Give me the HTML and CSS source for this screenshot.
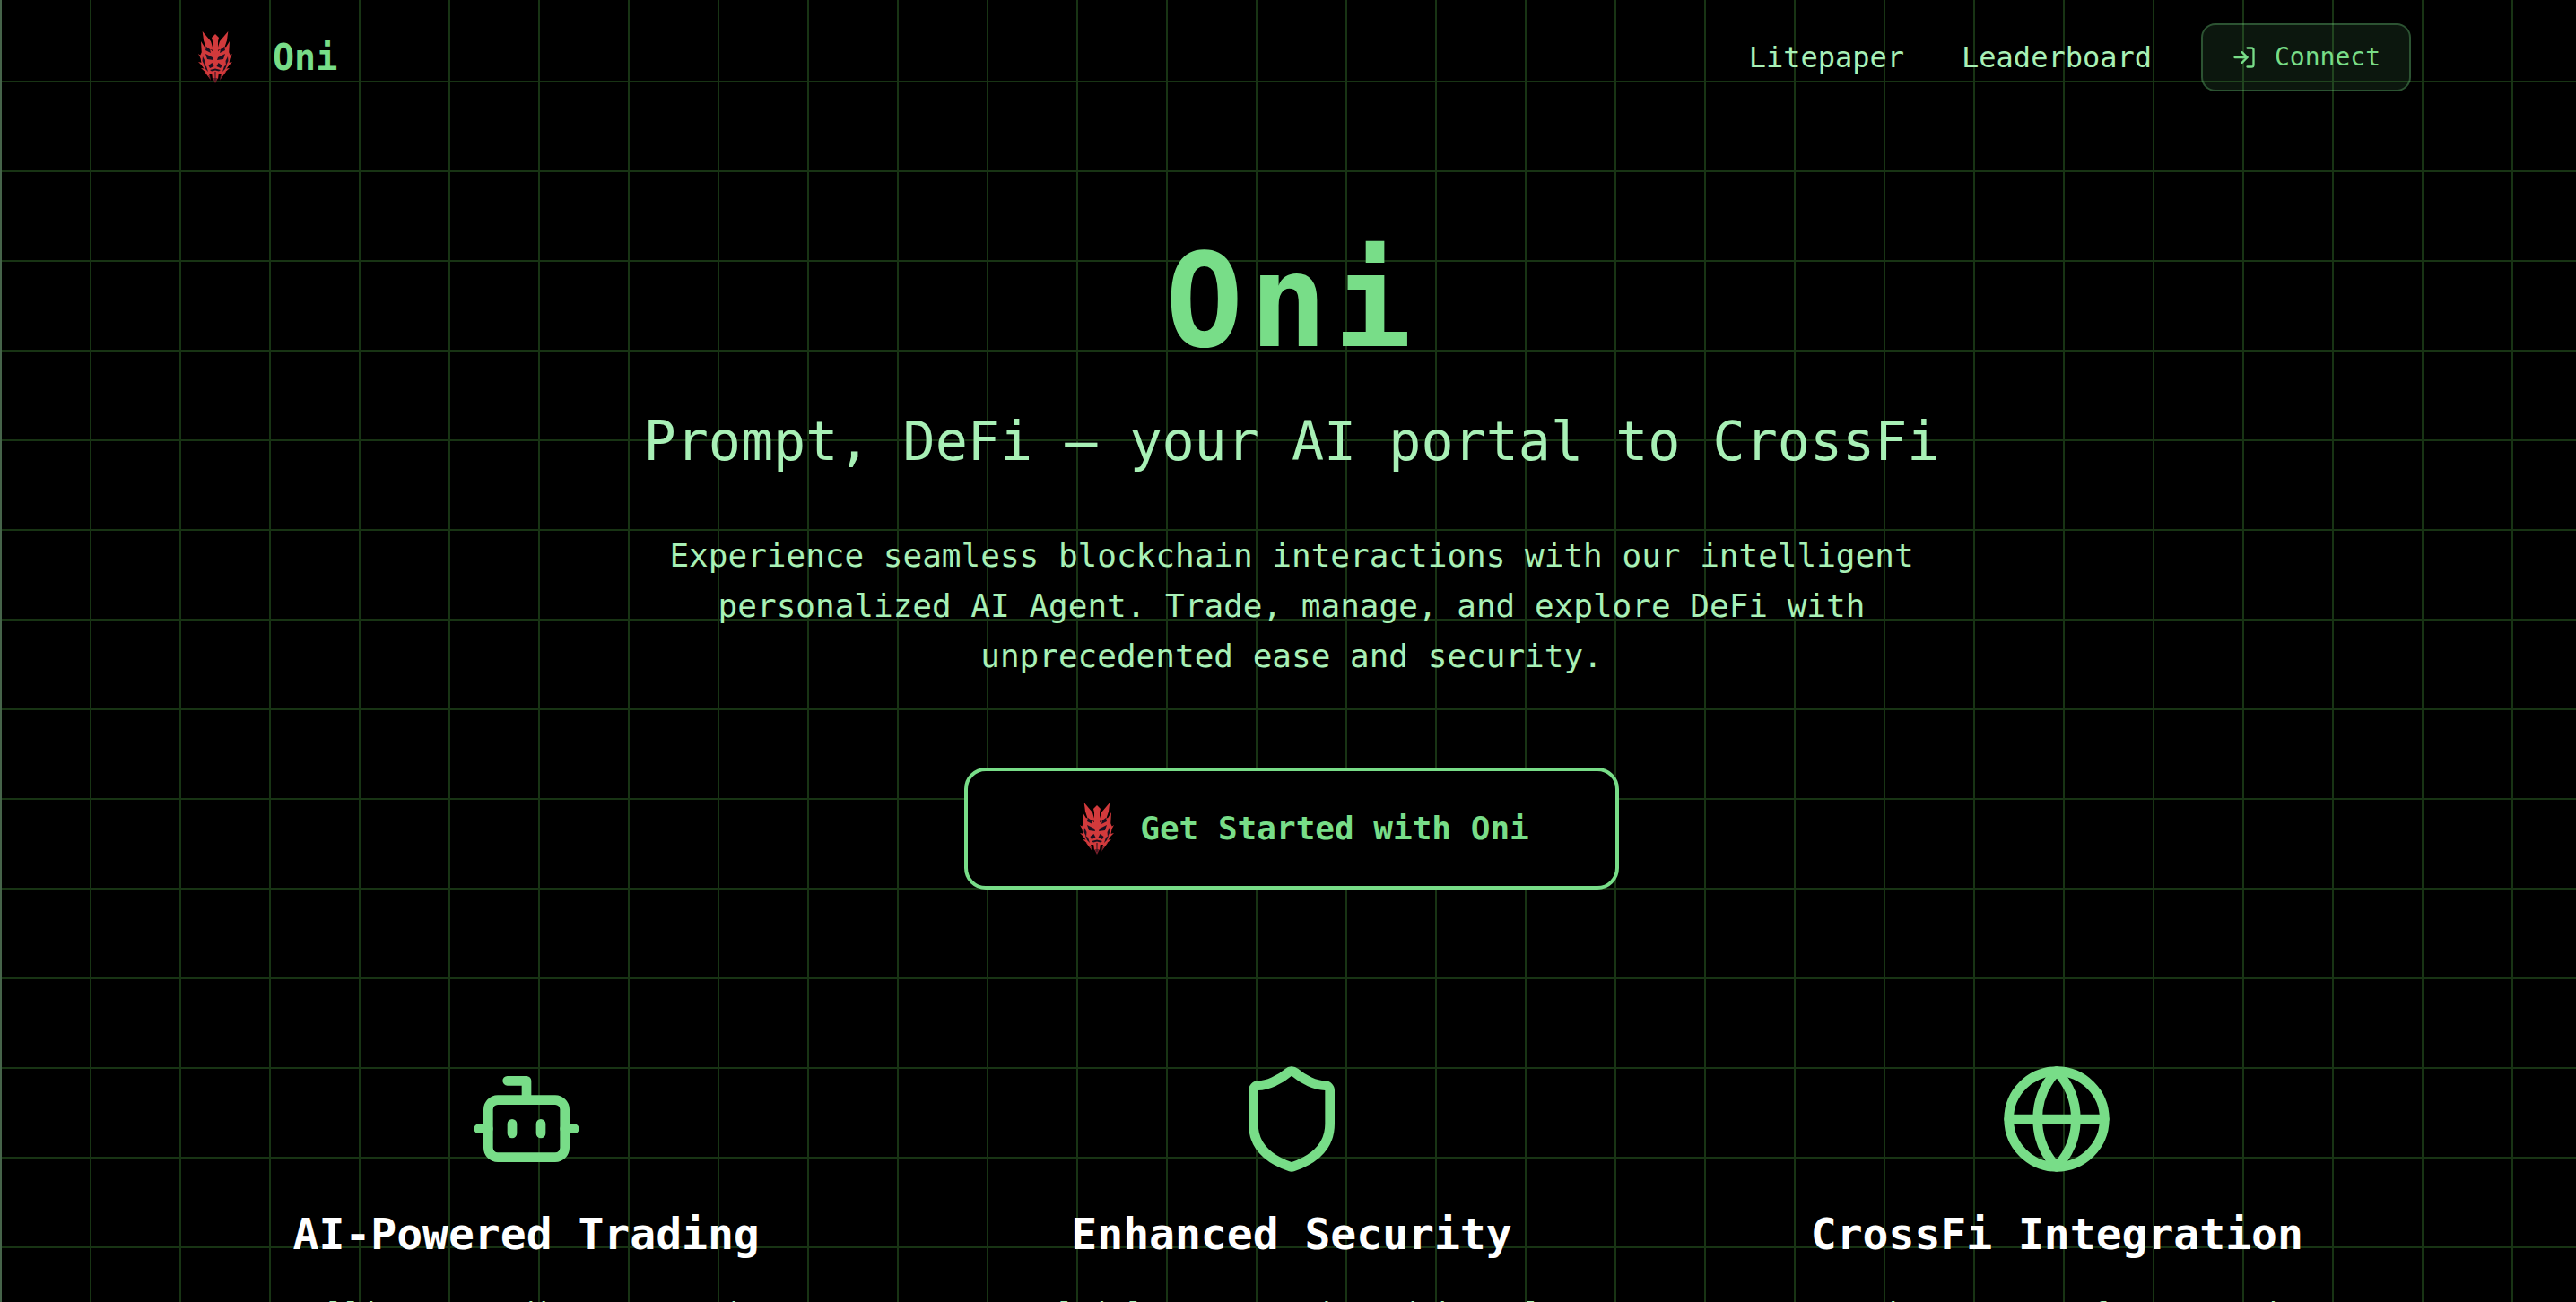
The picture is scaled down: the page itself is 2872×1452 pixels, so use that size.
FILE: index.html
```html
<!DOCTYPE html>
<html lang="en">
<head>
<meta charset="utf-8">
<title>Oni</title>
<link rel="stylesheet" href="styles.css">
</head>
<body>
<svg class="sprite" aria-hidden="true">
  <symbol id="oni-mask" viewBox="0 0 96 96">
    <g fill="#d23a3c">
      <polygon points="33.7,19 43,30 46,40 38,38 35,29"/>
      <polygon points="62.3,19 53,30 50,40 58,38 61,29"/>
      <polygon points="48,22 52,26 51,30 51,46 45,46 45,30 44,26"/>
      <polygon points="36,36 44,40 48,45 52,40 60,36 65,46 63,57 57,66 39,66 33,57 31,46"/>
      <polygon points="32,30 37,38 33,46"/>
      <polygon points="64,30 59,38 63,46"/>
      <polygon points="29,44 36,49 35,55"/>
      <polygon points="67,44 60,49 61,55"/>
      <polygon points="29,53 37,55 37,61"/>
      <polygon points="67,53 59,55 59,61"/>
      <polygon points="32,60 39,61 40,67"/>
      <polygon points="64,60 57,61 56,67"/>
      <polygon points="36,64 41,65 42,72"/>
      <polygon points="60,64 55,65 54,72"/>
      <polygon points="44,64 52,64 51,72 45,72"/>
    </g>
    <g fill="#7a1f2a">
      <polygon points="45,71 51,71 48,77"/>
      <polygon points="40,68 42,68 43,74"/>
      <polygon points="56,68 54,68 53,74"/>
    </g>
    <g fill="#1a1020">
      <polygon points="37,44 45,48 46,51 39,50"/>
      <polygon points="59,44 51,48 50,51 57,50"/>
      <polygon points="44.5,54 46.5,58 42,60 40.5,57"/>
      <polygon points="51.5,54 49.5,58 54,60 55.5,57"/>
      <polygon points="42,62 48,60.5 54,62 52,63.5 48,62.5 44,63.5"/>
      <polygon points="47.5,64 48.5,64 48.4,74 47.6,74"/>
      <polygon points="34,47 36.5,52 36,57 33.5,52"/>
      <polygon points="62,47 59.5,52 60,57 62.5,52"/>
      <polygon points="38,36 42,39 43,43 37,40"/>
      <polygon points="58,36 54,39 53,43 59,40"/>
      <polygon points="35,56 38,58 40,64 37,61"/>
      <polygon points="61,56 58,58 56,64 59,61"/>
    </g>
  </symbol>
</svg>

<div class="page">
  <div class="container">
    <nav class="nav">
      <a class="brand" href="#">
        <svg class="mask"><use href="#oni-mask"/></svg>
        <span class="brand-name">Oni</span>
      </a>
      <div class="nav-right">
        <a class="nav-link" href="#">Litepaper</a>
        <a class="nav-link" href="#">Leaderboard</a>
        <button class="connect" type="button">
          <svg class="connect-icon" viewBox="0 0 24 24" fill="none" stroke="currentColor" stroke-width="2" stroke-linecap="round" stroke-linejoin="round"><path d="m10 17 5-5-5-5"/><path d="M15 12H3"/><path d="M15 3h4a2 2 0 0 1 2 2v14a2 2 0 0 1-2 2h-4"/></svg>
          <span>Connect</span>
        </button>
      </div>
    </nav>

    <section class="hero">
      <h1 class="hero-title">Oni</h1>
      <h2 class="hero-sub">Prompt, DeFi — your AI portal to CrossFi</h2>
      <p class="hero-text">Experience seamless blockchain interactions with our intelligent personalized AI Agent. Trade, manage, and explore DeFi with unprecedented ease and security.</p>
      <a class="cta" href="#">
        <svg class="mask"><use href="#oni-mask"/></svg>
        <span>Get Started with Oni</span>
      </a>
    </section>

    <section class="features">
      <article class="feature">
        <svg class="feature-icon" viewBox="0 0 24 24" fill="none" stroke="currentColor" stroke-width="2" stroke-linecap="round" stroke-linejoin="round"><path d="M12 8V4H8"/><rect width="16" height="12" x="4" y="8" rx="2"/><path d="M2 14h2"/><path d="M20 14h2"/><path d="M15 13v2"/><path d="M9 13v2"/></svg>
        <h3 class="feature-title">AI-Powered Trading</h3>
        <p class="feature-text">Intelligent trading strategies, optimized by advanced AI models</p>
      </article>
      <article class="feature">
        <svg class="feature-icon" viewBox="0 0 24 24" fill="none" stroke="currentColor" stroke-width="2" stroke-linecap="round" stroke-linejoin="round"><path d="M20 13c0 5-3.5 7.5-7.66 8.95a1 1 0 0 1-.67-.01C7.5 20.5 4 18 4 13V6a1 1 0 0 1 1-1c2 0 4.5-1.2 6.24-2.72a1.17 1.17 0 0 1 1.52 0C14.51 3.81 17 5 19 5a1 1 0 0 1 1 1z"/></svg>
        <h3 class="feature-title">Enhanced Security</h3>
        <p class="feature-text">Multi-layer security with real-time monitoring of your assets</p>
      </article>
      <article class="feature">
        <svg class="feature-icon" viewBox="0 0 24 24" fill="none" stroke="currentColor" stroke-width="2" stroke-linecap="round" stroke-linejoin="round"><circle cx="12" cy="12" r="10"/><path d="M12 2a14.5 14.5 0 0 0 0 20 14.5 14.5 0 0 0 0-20"/><path d="M2 12h20"/></svg>
        <h3 class="feature-title">CrossFi Integration</h3>
        <p class="feature-text">Native support for CrossFi ecosystem and its DeFi protocols</p>
      </article>
    </section>
  </div>
</div>
</body>
</html>
```

FILE: styles.css
```css
* {
  box-sizing: border-box;
}

html,
body {
  margin: 0;
  height: 100%;
  overflow: hidden;
  background: #000;
}

a {
  color: inherit;
  text-decoration: none;
}

.sprite {
  display: none;
}

.page {
  width: 2880px;
  height: 1452px;
  overflow: hidden;
  color: #a8f0b6;
  font-family: "DejaVu Sans Mono", monospace;
  background-color: #000;
  background-image:
    linear-gradient(#46644a, #46644a),
    linear-gradient(#183414 2px, transparent 2px),
    linear-gradient(90deg, #183414 2px, transparent 2px);
  background-size: 2px 100%, 100px 100px, 100px 100px;
  background-position: 0 0, 0 -10px, 0 0;
  background-repeat: no-repeat, repeat, repeat;
}

.container {
  width: 2560px;
  margin: 0 auto;
  padding: 0 32px;
}

.nav {
  display: flex;
  align-items: center;
  justify-content: space-between;
  height: 128px;
  padding: 16px 0;
}

.brand {
  display: flex;
  align-items: center;
  gap: 16px;
}

.mask {
  display: block;
  flex: none;
  width: 96px;
  height: 96px;
}

.brand-name {
  color: #78dd88;
  font-size: 40px;
  line-height: 56px;
  font-weight: 700;
}

.nav-right {
  display: flex;
  align-items: center;
  gap: 64px;
}

.nav-link {
  font-size: 32px;
  line-height: 48px;
}

.connect {
  display: flex;
  align-items: center;
  gap: 20px;
  height: 76px;
  margin-left: -9px;
  padding: 0 32px;
  color: #78dd88;
  font-family: inherit;
  font-size: 28px;
  line-height: 40px;
  background: rgba(120, 221, 136, 0.1);
  border: 2px solid rgba(120, 221, 136, 0.3);
  border-radius: 16px;
}

.connect-icon {
  width: 28px;
  height: 28px;
}

.hero {
  display: flex;
  flex-direction: column;
  align-items: center;
  padding-top: 136px;
  text-align: center;
}

.hero-title {
  margin: 0 0 48px;
  color: #78dd88;
  font-size: 144px;
  line-height: 144px;
  font-weight: 700;
  letter-spacing: 7.2px;
}

.hero-sub {
  margin: 0 0 64px;
  font-size: 60px;
  line-height: 72px;
  font-weight: 400;
}

.hero-text {
  width: 1536px;
  margin: 0 0 96px;
  font-size: 36px;
  line-height: 56px;
}

.cta {
  display: flex;
  align-items: center;
  padding: 16px 96px;
  color: #78dd88;
  font-size: 36px;
  line-height: 56px;
  font-weight: 700;
  background: #000;
  border: 4px solid #78dd88;
  border-radius: 24px;
}

.features {
  display: grid;
  grid-template-columns: repeat(3, 1fr);
  gap: 64px;
  margin-top: 128px;
}

.feature {
  display: flex;
  flex-direction: column;
  align-items: center;
  padding: 64px;
  text-align: center;
}

.feature-icon {
  width: 128px;
  height: 128px;
  margin-bottom: 32px;
  color: #78dd88;
}

.feature-title {
  margin: 0 0 32px;
  color: #fff;
  font-size: 48px;
  line-height: 64px;
  font-weight: 700;
}

.feature-text {
  margin: 0;
  font-size: 32px;
  line-height: 48px;
}
```
